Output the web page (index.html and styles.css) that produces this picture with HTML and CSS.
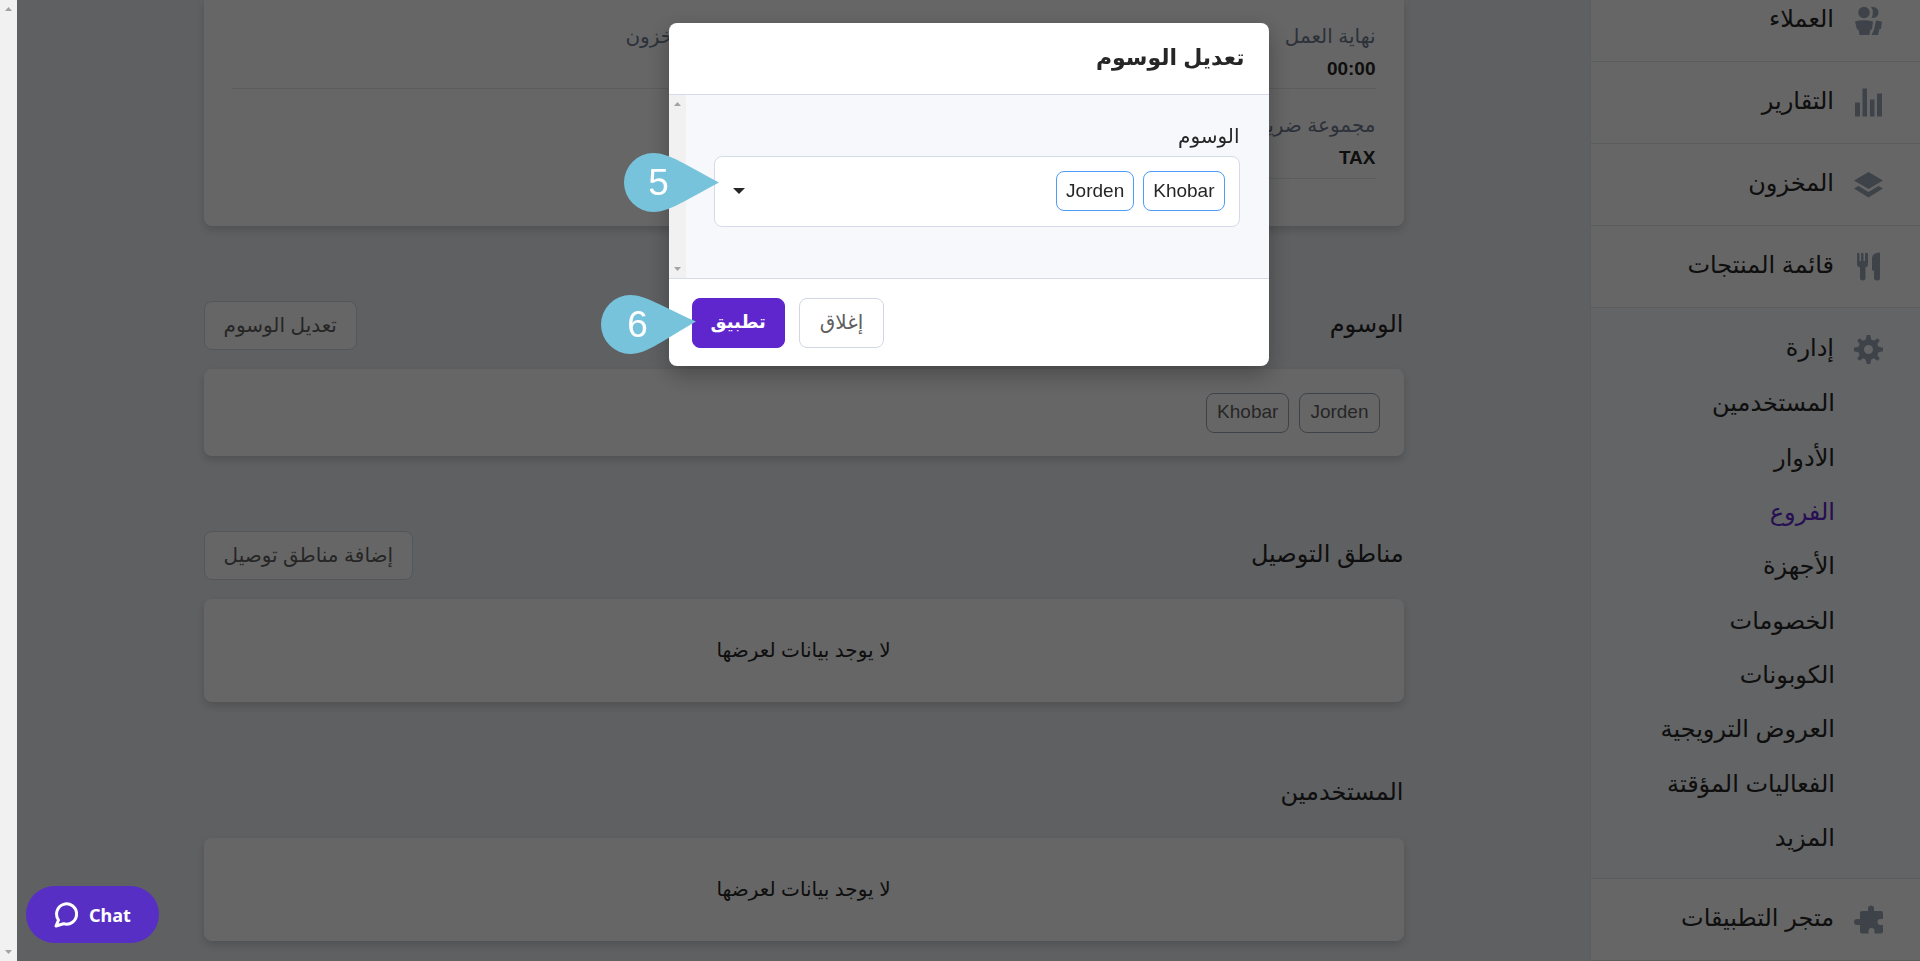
FILE: index.html
```html
<!DOCTYPE html>
<html lang="ar" dir="rtl">
<head>
<meta charset="utf-8">
<title>تعديل الوسوم</title>
<link rel="stylesheet" href="styles.css">
</head>
<body>
<div class="app">
  <nav class="sidebar">
    <a class="nav-item nav-item-first" href="#">
      <svg class="icon" viewBox="0 0 29 29"><circle cx="10" cy="6.500" r="5.800"/><path d="M1 15.500Q10 13 19 15.500L18 23.500H16.500L15.500 29H5.500L4.500 23.500H3ZM17 1Q24.500 .5 24.500 6.500Q24.500 12 17.500 12Q20.500 6 17 1ZM22 14.500L28 15.500L27 23H25.500L24 29H17.500L20 23.500Z"/></svg>
      <span>العملاء</span>
    </a>
    <a class="nav-item" href="#">
      <svg class="icon" viewBox="0 0 29 29"><path d="M1 14.500h5v14H1zM8.500.5h4.500v28H8.500zM16 11.500h4.500v17H16zM23 5.500h5v23h-5z"/></svg>
      <span>التقارير</span>
    </a>
    <a class="nav-item" href="#">
      <svg class="icon" viewBox="0 0 29 29"><path d="M14.500 2 29 10.500 14.500 19 0 10.500ZM4.500 16 14.500 22 24.500 16 29 18.500 14.500 27.500 0 18.500Z"/></svg>
      <span>المخزون</span>
    </a>
    <a class="nav-item" href="#">
      <svg class="icon" viewBox="0 0 29 29"><path d="M3 1.500Q4.300 0 5.500 1.500V9H7V1.500Q8.300 0 9.500 1.500V9H11V1.500Q12.500 0 14 1.500V12Q14 15 11.500 15.500V26Q11.500 28.500 8.700 28.500Q6 28.500 6 26V15.500Q3 14.500 3 12ZM26 .5V26Q26 28.500 23 28.500Q20 28.500 20 26V18.500H18V6Q18.500 .5 26 .5Z"/></svg>
      <span>قائمة المنتجات</span>
    </a>
    <section class="nav-open">
      <a class="nav-head" href="#">
        <svg class="icon" viewBox="0 0 29 29"><path fill-rule="evenodd" d="M12.700 0H16.300L17.200 4.500 20 5.700 23.500 3.200 25.800 5.500 23.300 9 24.500 11.800 29 12.700V16.300L24.500 17.200 23.300 20 25.800 23.500 23.500 25.800 20 23.300 17.200 24.500 16.300 29H12.700L11.800 24.500 9 23.300 5.500 25.800 3.200 23.500 5.700 20 4.500 17.200 0 16.300V12.700L4.500 11.800 5.700 9 3.200 5.500 5.500 3.200 9 5.700 11.800 4.500ZM14.500 10A4.500 4.500 0 1 0 14.500 19 4.500 4.500 0 1 0 14.500 10Z"/></svg>
        <span>إدارة</span>
      </a>
      <a class="nav-sub" href="#">المستخدمين</a>
      <a class="nav-sub" href="#">الأدوار</a>
      <a class="nav-sub nav-current" href="#">الفروع</a>
      <a class="nav-sub" href="#">الأجهزة</a>
      <a class="nav-sub" href="#">الخصومات</a>
      <a class="nav-sub" href="#">الكوبونات</a>
      <a class="nav-sub" href="#">العروض الترويجية</a>
      <a class="nav-sub" href="#">الفعاليات المؤقتة</a>
      <a class="nav-sub" href="#">المزيد</a>
    </section>
    <a class="nav-item" href="#">
      <svg class="icon" viewBox="0 0 29 29"><path d="M8 6H14V3.500A3 3 0 0 1 20 3.500V6H27Q29 6 29 8V14H26.500A3 3 0 0 0 26.500 20H29V26.500Q29 28.500 27 28.500H20.500V26A3 3 0 0 0 14.500 26V28.500H8Q6 28.500 6 26.500V20H3A3 3 0 0 1 3 14H6V8Q6 6 8 6Z"/></svg>
      <span>متجر التطبيقات</span>
    </a>
  </nav>

  <main class="main">
    <div class="content">
      <section class="card details">
        <dl class="field"><dt>نهاية العمل</dt><dd>00:00</dd></dl>
        <dl class="field"><dt>نهاية يوم المخزون</dt></dl>
        <dl class="field"><dt>مجموعة ضريبية</dt><dd>TAX</dd></dl>
      </section>

      <header class="section-head">
        <h2>الوسوم</h2>
        <button class="btn" type="button">تعديل الوسوم</button>
      </header>
      <section class="card tag-card">
        <span class="tag">Jorden</span>
        <span class="tag">Khobar</span>
      </section>

      <header class="section-head">
        <h2>مناطق التوصيل</h2>
        <button class="btn" type="button">إضافة مناطق توصيل</button>
      </header>
      <section class="card empty">لا يوجد بيانات لعرضها</section>

      <header class="section-head section-head-plain">
        <h2>المستخدمين</h2>
      </header>
      <section class="card empty">لا يوجد بيانات لعرضها</section>
    </div>
  </main>

  <div class="scroll-track">
    <svg class="arrow" viewBox="0 0 7 4"><path d="M0 4 3.500 0 7 4Z"/></svg>
    <svg class="arrow" viewBox="0 0 7 4"><path d="M0 0 3.500 4 7 0Z"/></svg>
  </div>
</div>

<div class="overlay">
  <div class="modal" role="dialog" aria-labelledby="modal-title">
    <header class="modal-head"><h1 id="modal-title">تعديل الوسوم</h1></header>
    <div class="modal-body">
      <div class="modal-fields">
        <label id="tags-label" for="tags-toggle">الوسوم</label>
        <div class="select">
          <span class="tag tag-selected">Khobar</span>
          <span class="tag tag-selected">Jorden</span>
          <button class="toggle" id="tags-toggle" type="button" aria-labelledby="tags-label">
            <svg class="caret" viewBox="0 0 12 6"><path d="M0 0H12L6 6Z"/></svg>
          </button>
        </div>
      </div>
      <div class="scroll-track">
        <svg class="arrow" viewBox="0 0 7 4"><path d="M0 4 3.500 0 7 4Z"/></svg>
        <svg class="arrow" viewBox="0 0 7 4"><path d="M0 0 3.500 4 7 0Z"/></svg>
      </div>
    </div>
    <footer class="modal-foot">
      <button class="btn" type="button">إغلاق</button>
      <button class="btn btn-primary" type="button">تطبيق</button>
    </footer>
    <div class="marker marker-five">
      <svg class="drop" viewBox="0 0 95 59"><path d="M29.500 0C45 0 62 12 95 29.500C62 47 45 59 29.500 59A29.500 29.500 0 0 1 29.500 0Z"/></svg>
      <span class="marker-number">5</span>
    </div>
    <div class="marker marker-six">
      <svg class="drop" viewBox="0 0 95 59"><path d="M29.500 0C44 0 60 11 95 26.500C64 44 46 59 29.500 59A29.500 29.500 0 0 1 29.500 0Z"/></svg>
      <span class="marker-number">6</span>
    </div>
  </div>
</div>

<button class="chat" type="button">
  <span>Chat</span>
  <svg class="chat-icon" viewBox="0 0 24 26"><path d="M2 24 4.500 18A10 10.200 0 1 1 9.500 21.700Z"/></svg>
</button>
</body>
</html>
```
FILE: styles.css
```css
* { box-sizing: border-box; }

body {
  margin: 0;
  font-family: "Liberation Sans", "DejaVu Sans", sans-serif;
  font-size: 20px;
  color: #262626;
  background: #edf0f5;
}

h1, h2, dl, dd { margin: 0; }
a { color: inherit; text-decoration: none; }
button { font: inherit; cursor: pointer; }
svg { display: block; }

.app { display: flex; min-height: 100vh; }

/* Sidebar */
.sidebar {
  display: flex;
  flex-direction: column;
  flex: 0 0 330px;
  background: #fff;
  font-size: 24px;
  line-height: 32px;
  border-left: 1px solid #e6e9ee;
}
.nav-item {
  display: flex;
  align-items: center;
  gap: 20px;
  height: 82px;
  padding-right: 37px;
  border-bottom: 1px solid #e4e7eb;
}
.nav-item span, .nav-head span { padding-bottom: 3px; }
.nav-item-first { height: 62px; padding-bottom: 20px; }
.icon { width: 29px; height: 29px; fill: #9ba6b7; flex: none; }
.nav-open {
  display: flex;
  flex-direction: column;
  flex: 1;
  padding: 14px 0 13px;
  background: #f7f9fc;
  border-bottom: 1px solid #e4e7eb;
}
.nav-head, .nav-sub { display: flex; align-items: center; flex: 1; }
.nav-head { gap: 20px; padding-right: 37px; }
.nav-sub { padding-right: 85px; }
.nav-current { color: #5f26cd; }

/* Page content */
.main { flex: 1; }
.content { max-width: 1200px; margin: 0 auto; }
.card {
  background: #fff;
  border-radius: 8px;
  box-shadow: 0 4px 8px rgba(0, 0, 0, 0.16);
}
.details {
  display: grid;
  grid-template-columns: 1fr 1fr;
  grid-template-rows: 89px 90px;
  column-gap: 60px;
  padding: 0 28px 47px;
  border-radius: 0 0 8px 8px;
}
.field {
  display: flex;
  flex-direction: column;
  padding-top: 20px;
  line-height: 32px;
  border-bottom: 1px solid #e4e7eb;
}
.field dt { color: #6f7b91; }
.field dd { font-size: 19px; font-weight: 700; line-height: 34px; }
.section-head {
  display: flex;
  align-items: center;
  justify-content: space-between;
  min-height: 42px;
  margin: 75px 0 19px;
}
.section-head-plain { align-items: flex-start; }
.section-head h2 { font-size: 24px; font-weight: 400; line-height: 30px; padding-bottom: 4px; }
.btn {
  height: 49px;
  padding: 0 19px 2px;
  color: #5f5f5f;
  background: #fff;
  border: 1px solid #d0d7e3;
  border-radius: 8px;
}
.tag-card { display: flex; gap: 10px; padding: 24px 24px 23px; }
.tag {
  height: 40px;
  padding: 0 10px;
  font-size: 19px;
  line-height: 36px;
  color: #5f5f5f;
  border: 1px solid #9ba6b7;
  border-radius: 8px;
}
.empty { padding: 36px; line-height: 31px; text-align: center; }

/* Scroll tracks */
.scroll-track {
  display: flex;
  flex-direction: column;
  justify-content: space-between;
  align-items: center;
  flex: 0 0 17px;
  padding: 7px 0;
  background: #f1f1f1;
}
.arrow { width: 7px; height: 4px; fill: #a3a3a3; }

/* Modal */
.overlay {
  position: fixed;
  inset: 0 0 0 17px;
  display: flex;
  justify-content: center;
  align-items: flex-start;
  padding-top: 23px;
  background: rgba(0, 0, 0, 0.6);
}
.modal {
  position: relative;
  width: 600px;
  background: #fff;
  border-radius: 8px;
  box-shadow: 0 8px 24px rgba(0, 0, 0, 0.3);
}
.modal-head { padding: 0 24px 2px; line-height: 69px; }
.modal-head h1 { font-size: 22px; font-weight: 700; }
.modal-body {
  display: flex;
  background: #f7f8fc;
  border-top: 1px solid #d5dbe8;
  border-bottom: 1px solid #d5dbe8;
}
.modal-fields { flex: 1; padding: 24px 29px 51px 28px; }
.modal-fields label { display: block; line-height: 35px; padding-bottom: 2px; }
.select {
  display: flex;
  align-items: center;
  gap: 9px;
  height: 71px;
  padding: 0 14px 2px;
  background: #fff;
  border: 1px solid #d5dbe8;
  border-radius: 8px;
}
.tag-selected {
  padding: 0 9px;
  color: #262626;
  border-color: #4f9cf9;
  line-height: 38px;
}
.toggle {
  margin-right: auto;
  padding: 4px;
  background: none;
  border: 0;
}
.caret { width: 12px; height: 6px; fill: #262626; }
.modal-foot {
  display: flex;
  justify-content: flex-end;
  gap: 14px;
  padding: 19px 23px 18px;
}
.modal-foot .btn { height: 50px; padding: 0 20px 2px; }
.modal-foot .btn-primary {
  padding: 0 18px 2px;
  color: #fff;
  font-size: 18px;
  font-weight: 700;
  background: #5f26cd;
  border-color: #5f26cd;
}

/* Step markers */
.marker { position: absolute; width: 95px; height: 59px; }
.marker-five { left: -45px; top: 130px; }
.marker-six { left: -68px; top: 272px; }
.drop { width: 95px; height: 59px; fill: #77c3dc; }
.marker-number {
  position: absolute;
  inset: 0 auto 0 0;
  width: 70px;
  text-align: center;
  font-size: 37px;
  line-height: 59px;
  color: #fff;
}
.marker-six .marker-number { width: 74px; }

/* Chat launcher */
.chat {
  position: fixed;
  left: 26px;
  bottom: 18px;
  display: flex;
  align-items: center;
  gap: 11px;
  height: 57px;
  padding: 0 28px;
  color: #fff;
  font-family: "Noto Sans", sans-serif;
  font-size: 18px;
  font-weight: 700;
  background: #582fc5;
  border: 0;
  border-radius: 29px;
}
.chat-icon {
  width: 24px;
  height: 26px;
  fill: none;
  stroke: #fff;
  stroke-width: 3;
  stroke-linejoin: round;
}
```
